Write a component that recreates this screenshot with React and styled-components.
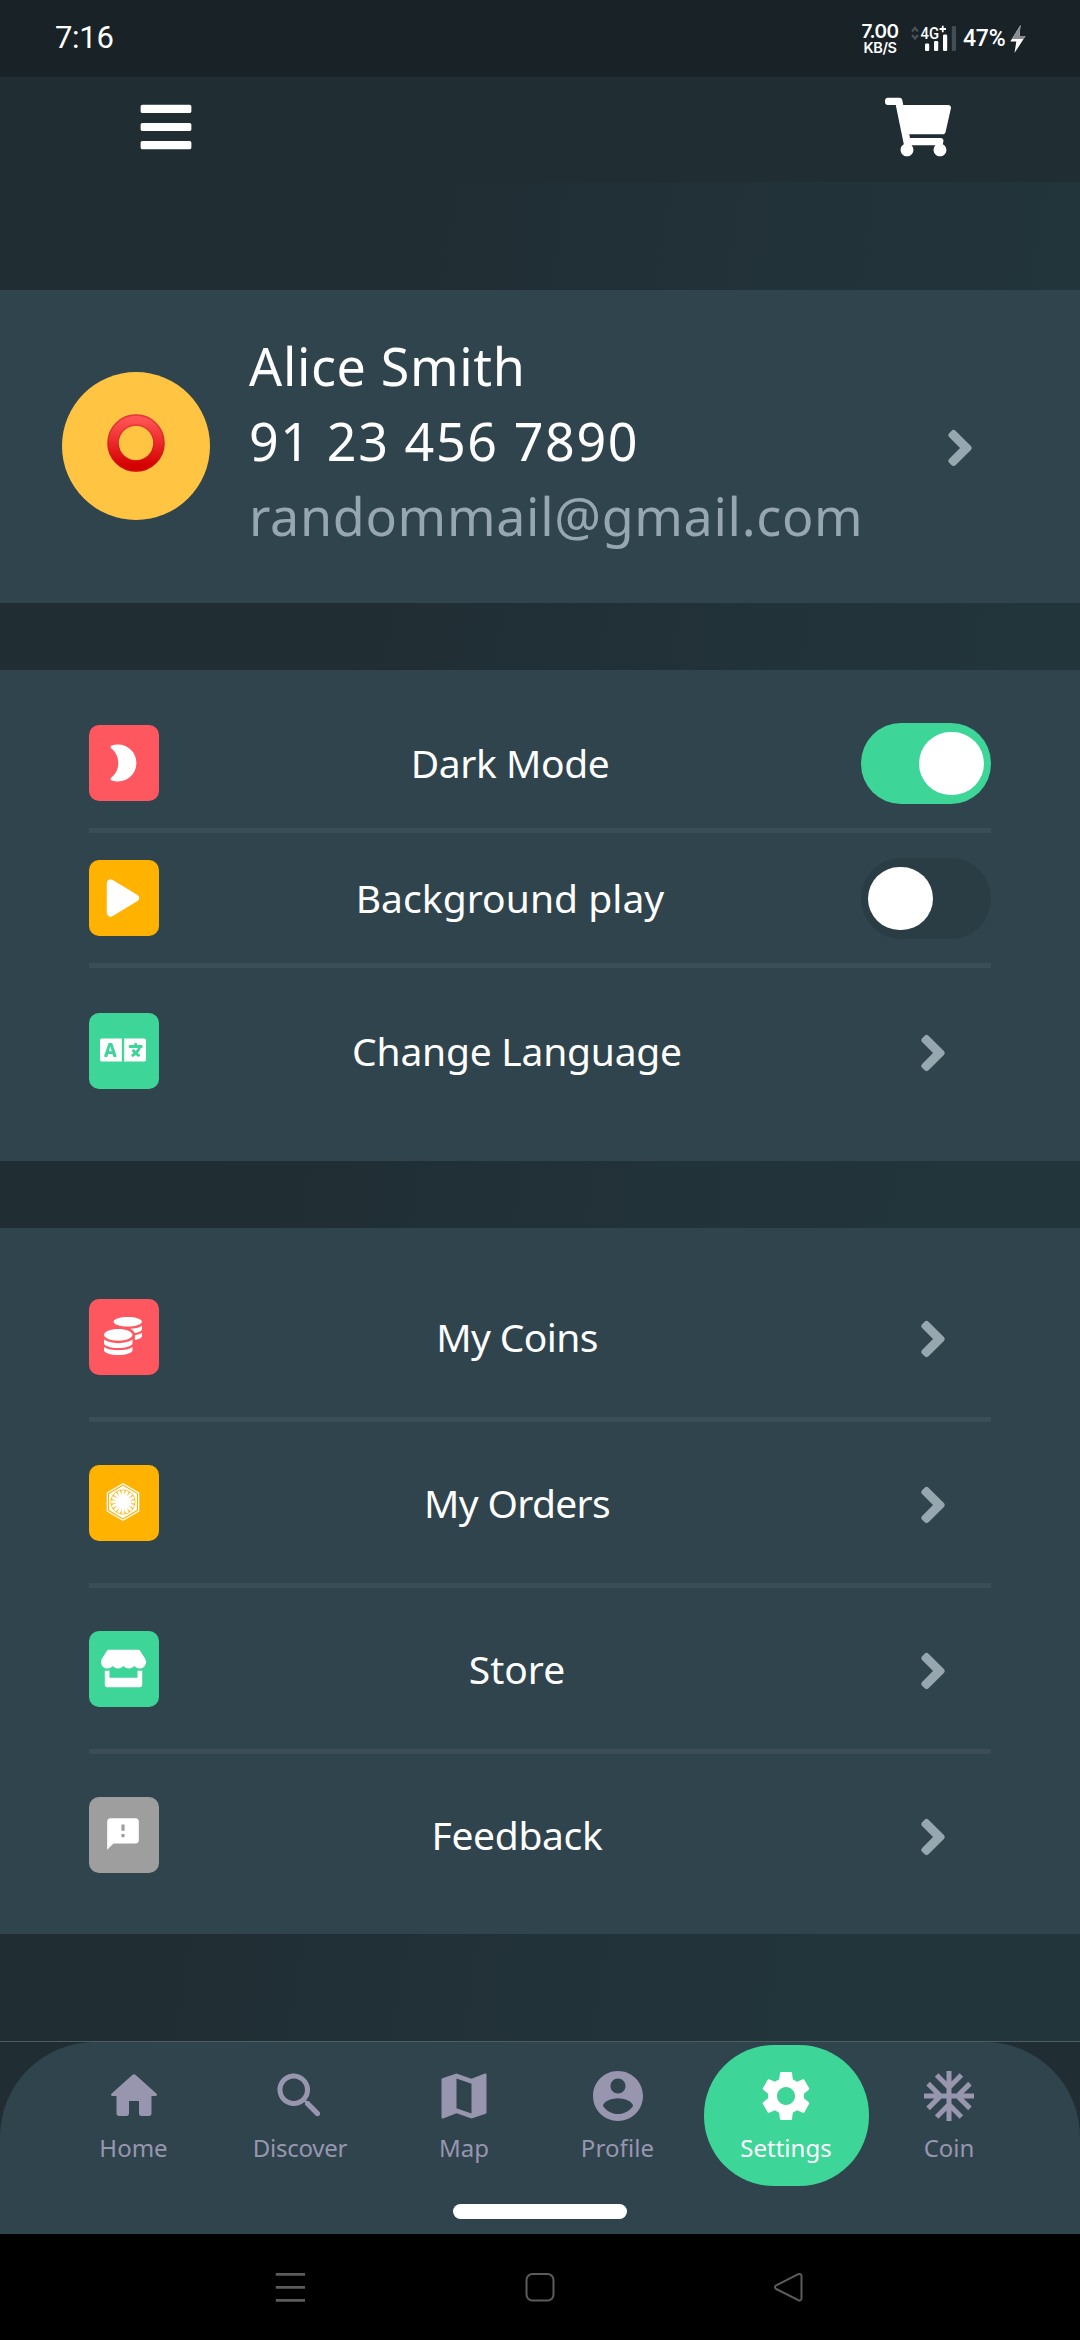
import React from "react";
import styled, { createGlobalStyle } from "styled-components";
import {
  FaAngleRight,
  FaBars,
  FaCoins,
  FaFirstOrder,
  FaLanguage,
  FaShoppingCart,
  FaStore,
} from "react-icons/fa";
import { IoPlay } from "react-icons/io5";
import { MdAcUnit, MdFeedback, MdMap, MdSettings } from "react-icons/md";

const GlobalStyle = createGlobalStyle`
  * { box-sizing: border-box; }
  body {
    margin: 0;
    background: #202d33;
    font-family: "Noto Sans", "Open Sans", sans-serif;
    color: #fff;
  }
  svg { display: block; flex: none; }
`;

const Screen = styled.div`
  width: 1080px;
  height: 2340px;
  display: flex;
  flex-direction: column;
  overflow: hidden;
`;

/* ---------- status bar ---------- */

const StatusBar = styled.div`
  height: 77px;
  flex: none;
  display: flex;
  justify-content: space-between;
  padding: 0 54px 0 55px;
  background: #182227;
  font-family: Inter, Roboto, sans-serif;
`;

const Clock = styled.span`
  font-family: Roboto, sans-serif;
  font-size: 31px;
  line-height: 76px;
  letter-spacing: -0.3px;
`;

const StatusGroup = styled.div`
  display: flex;
  align-items: flex-start;
`;

const NetSpeed = styled.div`
  display: flex;
  flex-direction: column;
  align-items: center;
  width: 40px;
  padding-top: 23px;
  margin-right: 11px;
  font-weight: 600;
`;

const SpeedValue = styled.span`
  font-size: 19px;
  line-height: 18px;
  letter-spacing: -0.6px;
`;

const SpeedUnit = styled.span`
  font-size: 14.5px;
  line-height: 13px;
  letter-spacing: -0.4px;
`;

const Battery = styled.span`
  width: 46px;
  margin-left: 6px;
  font-family: Roboto, sans-serif;
  font-size: 23px;
  font-weight: 500;
  line-height: 77px;
  letter-spacing: -0.2px;
`;

const SignalIcon = styled.svg`
  margin-top: 22px;
`;

const BoltIcon = styled.svg`
  margin: 25px 0 0 1px;
`;

/* ---------- header ---------- */

const Header = styled.header`
  height: 105px;
  flex: none;
  display: flex;
  justify-content: space-between;
  align-items: flex-start;
  padding: 0 129px 0 137px;
  background: #202d33;
`;

const MenuButton = styled.div`
  padding-top: 21px;
`;

const CartButton = styled.div`
  padding-top: 17px;
`;

/* ---------- scrolling content ---------- */

const Content = styled.main`
  flex: 1;
  display: flex;
  flex-direction: column;
  gap: 67px;
  padding-top: 108px;
  background: linear-gradient(98.6deg, #202d33 25%, #22353b 80%);
`;

const Card = styled.section`
  flex: none;
  height: ${(p) => p.$height}px;
  background: #30444e;
`;

const ProfileCard = styled(Card)`
  display: flex;
  align-items: flex-start;
  padding: 38px 0 0 62px;
`;

const Avatar = styled.div`
  width: 148px;
  height: 148px;
  margin: 44px 39px 0 0;
  padding-bottom: 6px;
  display: flex;
  align-items: center;
  justify-content: center;
  border-radius: 50%;
  background: #ffc542;
`;

const ProfileText = styled.div`
  width: 680px;
  display: flex;
  flex-direction: column;
`;

const ProfileLine = styled.span`
  font-size: 52px;
  line-height: 75px;
  white-space: nowrap;
  letter-spacing: ${(p) => p.$track}px;
  color: ${(p) => (p.$muted ? "#97a7b0" : "#fff")};
`;

const ProfileArrow = styled.div`
  margin-top: 91px;
  margin-left: 2px;
`;

const List = styled(Card)`
  display: flex;
  flex-direction: column;
  padding: 28px 89px 0;
`;

const Row = styled.div`
  height: ${(p) => p.$height}px;
  flex: none;
  display: flex;
  align-items: center;
  justify-content: space-between;
`;

const Divider = styled.div`
  height: 5px;
  flex: none;
  background: #3b4d57;
`;

const Badge = styled.div`
  width: 70px;
  height: 76px;
  display: flex;
  align-items: center;
  justify-content: center;
  padding: 0 2px 1px 0;
  border-radius: 10px;
  background: ${(p) => p.$color};
`;

const Label = styled.span`
  font-size: 39px;
  line-height: 54px;
  white-space: nowrap;
  letter-spacing: ${(p) => p.$track}px;
`;

const ArrowSlot = styled.div`
  width: 116px;
  padding-top: 5px;
  display: flex;
  justify-content: center;
`;

const Toggle = styled.div`
  width: 130px;
  height: 81px;
  display: flex;
  align-items: center;
  justify-content: ${(p) => (p.$on ? "flex-end" : "flex-start")};
  padding: 0 7px;
  border-radius: 40px;
  background: ${(p) => (p.$on ? "#3ed598" : "#2a3c44")};
`;

const Knob = styled.div`
  width: 65px;
  height: 63px;
  border-radius: 32px;
  background: #fff;
`;

/* ---------- bottom navigation ---------- */

const TabBarFrame = styled.footer`
  height: 193px;
  flex: none;
  border-top: 1px solid #4d5d64;
  background: #202d33;
`;

const TabBar = styled.nav`
  height: 192px;
  display: flex;
  flex-direction: column;
  align-items: center;
  padding-top: 3px;
  border-radius: 95px 95px 0 0;
  background: #30444e;
`;

const Tabs = styled.div`
  width: 953px;
  display: flex;
  justify-content: space-between;
`;

const Tab = styled.div`
  width: ${(p) => p.$width}px;
  height: 141px;
  padding-top: 21px;
  display: flex;
  flex-direction: column;
  align-items: center;
  border-radius: 70px;
  color: ${(p) => (p.$active ? "#fff" : "#9896af")};
  background: ${(p) => (p.$active ? "#3ed598" : "transparent")};
`;

const TabLabel = styled.span`
  margin-top: 6px;
  font-size: 24px;
  line-height: 32px;
  letter-spacing: ${(p) => p.$track}px;
`;

const HomeIndicator = styled.div`
  width: 174px;
  height: 15px;
  margin-top: 18px;
  border-radius: 8px;
  background: #fff;
`;

const SystemBar = styled.div`
  height: 106px;
  flex: none;
  display: flex;
  align-items: flex-start;
  justify-content: space-between;
  padding: 38px 276px 0 275px;
  background: #000;
`;

/* ---------- drawings ---------- */

const Moon = () => (
  <svg width="27" height="38" viewBox="0 0 27 38" fill="#fff">
    <path d="M8 .6C18.4 .6 26.4 8.8 26.4 19S18.4 37.4 8 37.4C5.6 37.4 3.6 37.1 1.8 36.5C.3 36 .2 34.3 1.3 33.5C5.7 30.2 8.3 25 8.3 19S5.7 7.8 1.3 4.5C.2 3.7 .3 2 1.8 1.5C3.6 .9 5.6 .6 8 .6Z" />
  </svg>
);

const HomeIcon = () => (
  <svg width="60" height="60" viewBox="0 0 24 24" fill="currentColor">
    <path d="M10 19v-5h4v5c0 .55.45 1 1 1h3c.55 0 1-.45 1-1v-7h1.7c.46 0 .68-.57.33-.87L12.67 3.6c-.38-.34-.96-.34-1.34 0l-8.36 7.53c-.34.3-.13.87.33.87H5v7c0 .55.45 1 1 1h3c.55 0 1-.45 1-1z" />
  </svg>
);

const SearchIcon = () => (
  <svg width="60" height="60" viewBox="0 0 24 24" fill="currentColor">
    <path d="M15.5 14h-.79l-.28-.27c1.2-1.4 1.82-3.31 1.48-5.34-.47-2.78-2.79-5-5.59-5.34-4.23-.52-7.79 3.04-7.27 7.27.34 2.8 2.56 5.12 5.34 5.59 2.03.34 3.94-.28 5.34-1.48l.27.28v.79l4.25 4.25c.41.41 1.08.41 1.49 0 .41-.41.41-1.08 0-1.49L15.5 14zm-6 0C7.01 14 5 11.99 5 9.5S7.01 5 9.5 5 14 7.01 14 9.5 11.99 14 9.5 14z" />
  </svg>
);

const ProfileIcon = () => (
  <svg width="60" height="60" viewBox="0 0 24 24" fill="currentColor">
    <path d="M12 2C6.48 2 2 6.48 2 12s4.48 10 10 10 10-4.48 10-10S17.52 2 12 2zm0 3c1.66 0 3 1.34 3 3s-1.34 3-3 3-3-1.34-3-3 1.34-3 3-3zm0 14.2c-2.5 0-4.71-1.28-6-3.22.03-1.99 4-3.08 6-3.08 1.99 0 5.97 1.09 6 3.08-1.29 1.94-3.5 3.22-6 3.22z" />
  </svg>
);

const RingIcon = () => (
  <svg width="58" height="58" viewBox="0 0 58 58">
    <defs>
      <linearGradient id="ring" x1="0" y1="0" x2="0" y2="1">
        <stop offset="0" stopColor="#ff5252" />
        <stop offset="1" stopColor="#d50000" />
      </linearGradient>
    </defs>
    <circle cx="29" cy="29" r="23" fill="none" stroke="url(#ring)" strokeWidth="11.4" />
    <circle cx="29" cy="29" r="28" fill="none" stroke="#c41c1c" strokeOpacity="0.45" strokeWidth="1.4" />
    <circle cx="29" cy="29" r="17.8" fill="none" stroke="#c41c1c" strokeOpacity="0.4" strokeWidth="1.4" />
  </svg>
);

const Signal = () => (
  <SignalIcon width="46" height="32" viewBox="0 0 46 32">
    <path d="M1 9.5 4 6l3 3.5M1 13l3 3.5L7 13" fill="none" stroke="#48535a" strokeWidth="2.2" />
    <text x="9.5" y="16.5" fill="#fff" fontFamily="Roboto, sans-serif" fontSize="17" fontWeight="500" textLength="18.5" lengthAdjust="spacingAndGlyphs">4G</text>
    <path d="M28.5 7h6.5M31.75 3.8v6.5" stroke="#fff" strokeWidth="1.8" />
    <rect x="14" y="21.5" width="4.2" height="7.5" rx="1.2" fill="#fff" />
    <rect x="23" y="19" width="4.2" height="10" rx="1.2" fill="#fff" />
    <rect x="32" y="12.5" width="4.2" height="16.5" rx="1.2" fill="#fff" />
    <rect x="40.8" y="4" width="4.2" height="25" rx="1.2" fill="#434e54" />
  </SignalIcon>
);

const Bolt = () => (
  <BoltIcon width="16" height="28" viewBox="0 0 16 28">
    <path d="M10.5 0 .3 16.5H6.3L4.5 28 15.5 11H9.5Z" fill="#fff" />
    <path d="M10.500 0 1.800 14H13.600L15.500 11H9.500Z" fill="#878d90" />
  </BoltIcon>
);

const Chevron = () => <FaAngleRight color="#97a7b0" size={58} />;

const toggles = [
  { label: "Dark Mode", track: -0.42, color: "#ff575f", icon: <Moon />, height: 130, on: true },
  { label: "Background play", track: 0.05, color: "#ffb200", icon: <IoPlay size={52} />, height: 130, on: false },
  { label: "Change Language", track: -0.23, color: "#3ed598", icon: <FaLanguage size={46} />, height: 165 },
];

const links = [
  { label: "My Coins", track: -0.6, color: "#ff575f", icon: <FaCoins size={38} />, height: 161 },
  { label: "My Orders", track: -0.65, color: "#ffb200", icon: <FaFirstOrder size={38} />, height: 161 },
  { label: "Store", track: 0, color: "#3ed598", icon: <FaStore size={45} />, height: 161 },
  { label: "Feedback", track: -0.35, color: "#9e9e9e", icon: <MdFeedback size={38} />, height: 161 },
];

const tabs = [
  { label: "Home", width: 140, track: 0, icon: <HomeIcon /> },
  { label: "Discover", width: 167, track: -0.24, icon: <SearchIcon /> },
  { label: "Map", width: 135, track: 0, icon: <MdMap size={60} /> },
  { label: "Profile", width: 146, track: 0.1, icon: <ProfileIcon /> },
  { label: "Settings", width: 165, track: 0, icon: <MdSettings size={60} />, active: true },
  { label: "Coin", width: 135, track: 0, icon: <MdAcUnit size={60} /> },
];

const SettingsList = ({ items, height }) => (
  <List $height={height}>
    {items.map((item, i) => (
      <React.Fragment key={item.label}>
        {i > 0 && <Divider />}
        <Row $height={item.height}>
          <Badge $color={item.color}>{item.icon}</Badge>
          <Label $track={item.track}>{item.label}</Label>
          {item.on === undefined ? (
            <ArrowSlot>
              <Chevron />
            </ArrowSlot>
          ) : (
            <Toggle $on={item.on}>
              <Knob />
            </Toggle>
          )}
        </Row>
      </React.Fragment>
    ))}
  </List>
);

export default function App() {
  return (
    <Screen>
      <GlobalStyle />
      <StatusBar>
        <Clock>7:16</Clock>
        <StatusGroup>
          <NetSpeed>
            <SpeedValue>7.00</SpeedValue>
            <SpeedUnit>KB/S</SpeedUnit>
          </NetSpeed>
          <Signal />
          <Battery>47%</Battery>
          <Bolt />
        </StatusGroup>
      </StatusBar>

      <Header>
        <MenuButton>
          <FaBars size={58} />
        </MenuButton>
        <CartButton>
          <FaShoppingCart size={66} />
        </CartButton>
      </Header>

      <Content>
        <ProfileCard $height={313}>
          <Avatar>
            <RingIcon />
          </Avatar>
          <ProfileText>
            <ProfileLine $track={0.65}>Alice Smith</ProfileLine>
            <ProfileLine $track={1.6}>91 23 456 7890</ProfileLine>
            <ProfileLine $track={0.68} $muted>
              randommail@gmail.com
            </ProfileLine>
          </ProfileText>
          <ProfileArrow>
            <Chevron />
          </ProfileArrow>
        </ProfileCard>
        <SettingsList items={toggles} height={491} />
        <SettingsList items={links} height={706} />
      </Content>

      <TabBarFrame>
        <TabBar>
          <Tabs>
            {tabs.map((tab) => (
              <Tab key={tab.label} $width={tab.width} $active={tab.active}>
                {tab.icon}
                <TabLabel $track={tab.track}>{tab.label}</TabLabel>
              </Tab>
            ))}
          </Tabs>
          <HomeIndicator />
        </TabBar>
      </TabBarFrame>

      <SystemBar>
        <svg width="30" height="30" viewBox="0 0 30 30" stroke="#5c5c5c" strokeWidth="2.7">
          <path d="M.8 2.4H30M.8 15.4H30M.8 28.4H30" />
        </svg>
        <svg width="30" height="30" viewBox="0 0 30 30" fill="none" stroke="#5c5c5c" strokeWidth="2">
          <rect x="1.5" y="2" width="27" height="26.6" rx="6" />
        </svg>
        <svg width="30" height="30" viewBox="0 0 30 30" fill="none" stroke="#5c5c5c" strokeWidth="2" strokeLinejoin="round">
          <path d="M2.2 13.3 24.3 2.2Q27.5 1.2 27.5 4.5V26Q27.5 29.3 24.3 28.2L2.2 17Q-.3 15.2 2.2 13.3Z" />
        </svg>
      </SystemBar>
    </Screen>
  );
}
